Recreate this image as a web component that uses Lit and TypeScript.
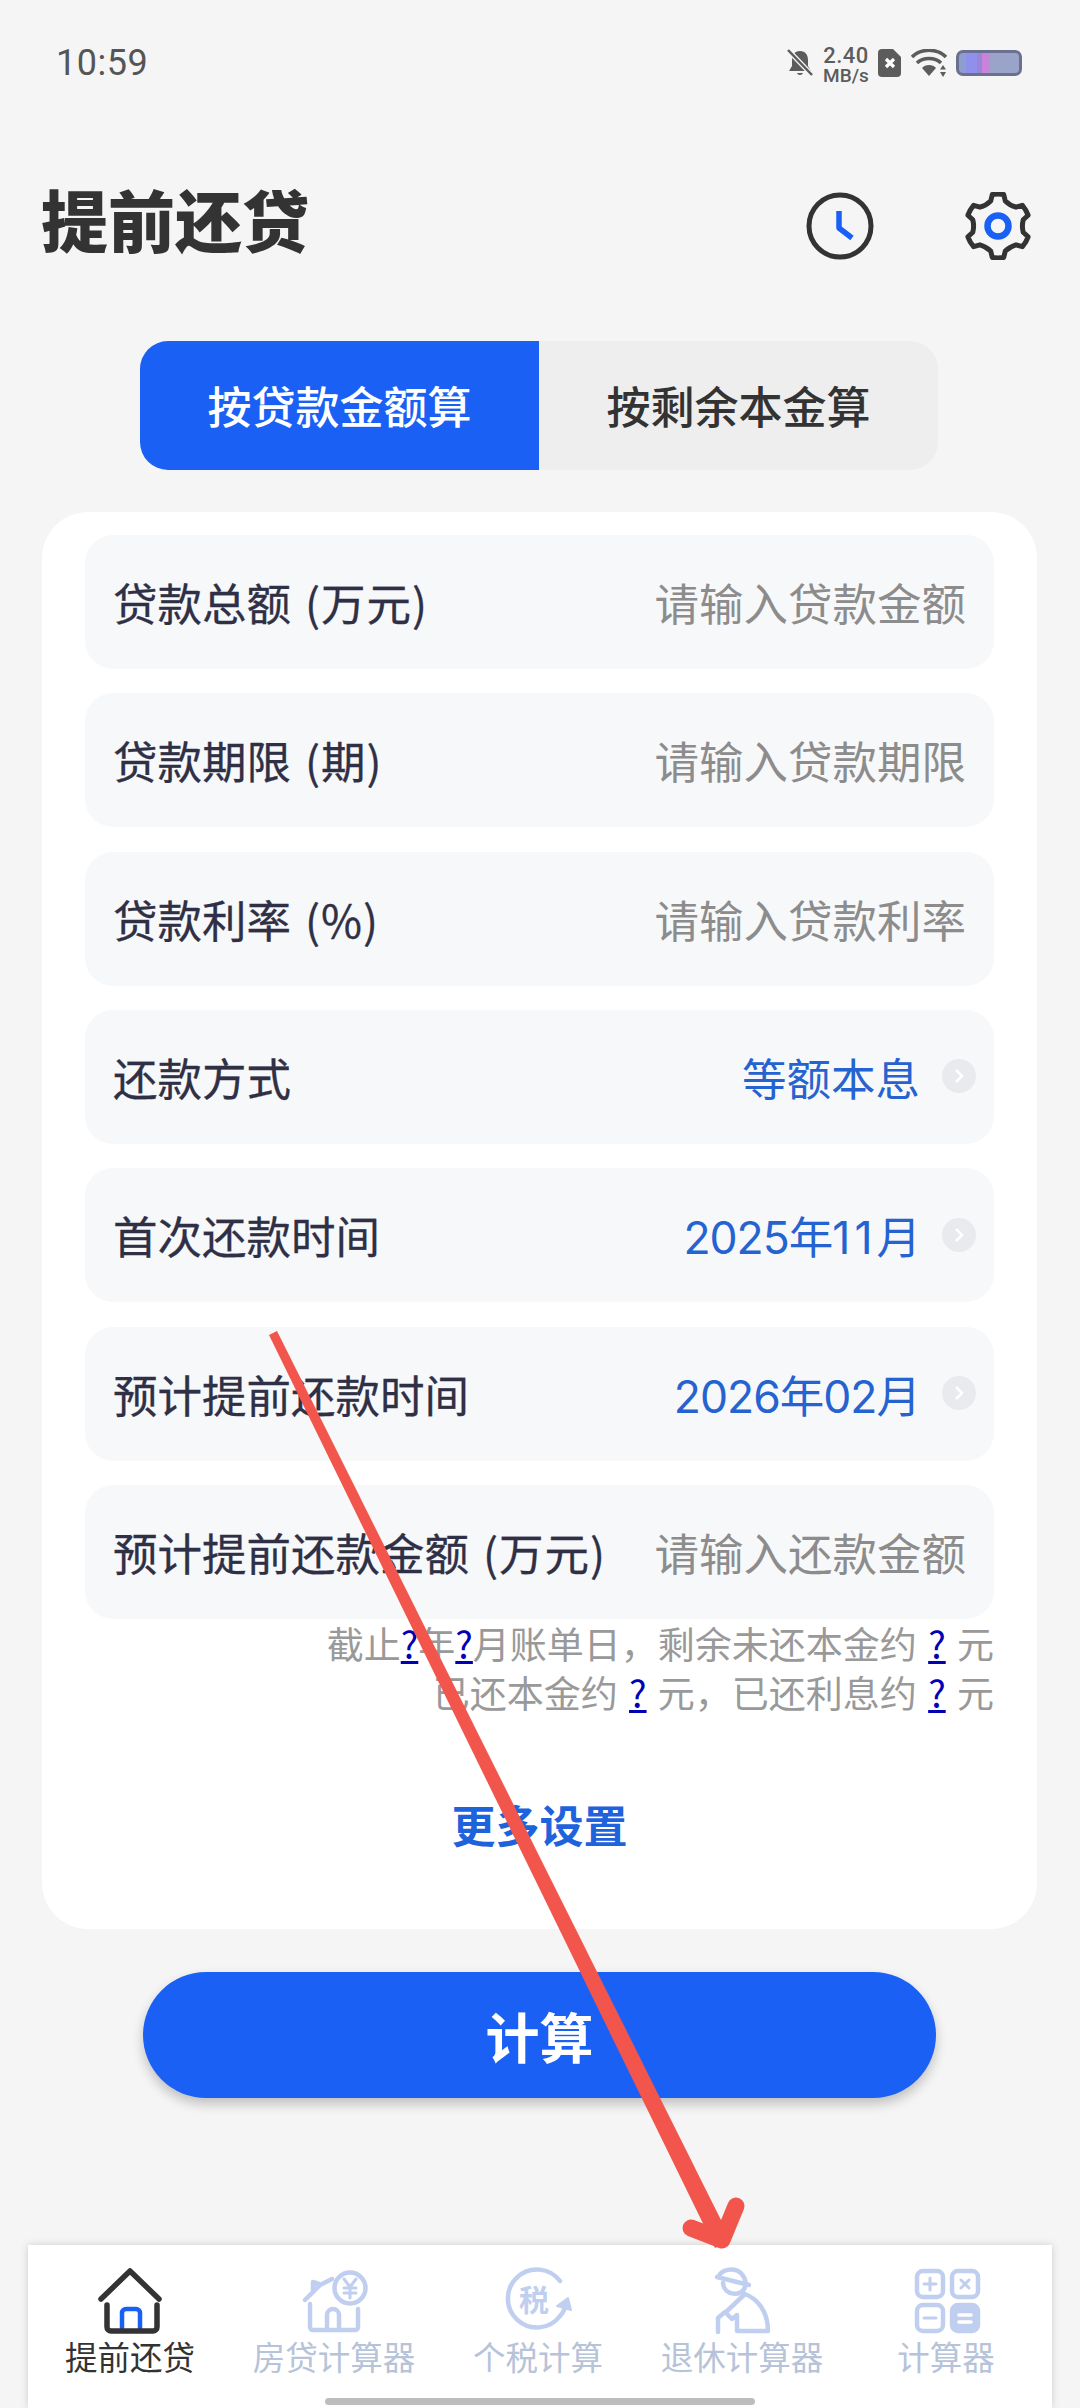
import { LitElement, html, css, svg } from "lit";
import { customElement } from "lit/decorators.js";

const gearPath = (() => {
  const cx = 34, cy = 34, R = 32, r = 25, n = 6;
  const pts: string[] = [];
  for (let i = 0; i < n; i++) {
    const a = (i * 2 * Math.PI) / n - Math.PI / 2;
    const step = (2 * Math.PI) / n;
    const p = (rad: number, ang: number) =>
      `${(cx + rad * Math.cos(ang)).toFixed(1)} ${(cy + rad * Math.sin(ang)).toFixed(1)}`;
    pts.push(`${i === 0 ? "M" : "L"}${p(r + 1, a - step * 0.27)}`);
    pts.push(`L${p(R, a - step * 0.17)}`);
    pts.push(`A${R} ${R} 0 0 1 ${p(R, a + step * 0.17)}`);
    pts.push(`L${p(r + 1, a + step * 0.27)}`);
    pts.push(`A${r} ${r} 0 0 0 ${p(r + 1, a + step * 0.73)}`);
  }
  return pts.join(" ") + "Z";
})();

const homeIcon = svg`<svg class="ti" viewBox="70 2250 120 90">
  <path d="M101 2299 L130 2271 L159 2299" fill="none" stroke="#333" stroke-width="5.5" stroke-linecap="round" stroke-linejoin="round"/>
  <path d="M122 2331V2313a4 4 0 0 1 4-4h10a4 4 0 0 1 4 4v18" fill="none" stroke="#1a60f5" stroke-width="4.5"/>
  <path d="M107 2305V2327a4 4 0 0 0 4 4H153a4 4 0 0 0 4-4V2305" fill="none" stroke="#333" stroke-width="5.5" stroke-linecap="round"/>
</svg>`;

const loanIcon = svg`<svg class="ti" viewBox="274 2250 120 90">
  <g fill="none" stroke="#c0cff0" stroke-width="4.5" stroke-linecap="round" stroke-linejoin="round">
    <path d="M305 2300 L320 2285 L332 2279"/>
    <path d="M313 2292 L313 2282 L319 2284"/>
    <path d="M310 2304V2327a3 3 0 0 0 3 3H355a3 3 0 0 0 3-3V2309"/>
    <path d="M327 2330V2315a6 6 0 0 1 12 0V2330"/>
    <circle cx="350" cy="2288" r="15.5"/>
    <path d="M344 2279l6 8l6-8M350 2287V2298M344 2288H356M344 2293H356" stroke-width="3"/>
  </g>
</svg>`;

const taxIcon = svg`<svg class="ti" viewBox="478 2250 120 90">
  <path d="M560 2281A29 29 0 1 0 560 2316" fill="none" stroke="#c0cff0" stroke-width="4.5" stroke-linecap="round"/>
  <path d="M560 2316Q565 2311 566 2303" fill="none" stroke="#c0cff0" stroke-width="4.5" stroke-linecap="round"/>
  <path d="M557 2306L568 2298L571 2310Z" fill="#c0cff0" stroke="#c0cff0" stroke-width="2" stroke-linejoin="round"/>
  <text class="tax" x="534" y="2311">税</text>
</svg>`;

const retireIcon = svg`<svg class="ti" viewBox="682 2250 120 90">
  <g fill="none" stroke="#c0cff0" stroke-width="4.5" stroke-linecap="round" stroke-linejoin="round">
    <path d="M717 2277L749 2285"/>
    <path d="M719 2276C722 2268 743 2264 746 2284"/>
    <path d="M723 2283C724 2296 742 2297 745 2287"/>
    <path d="M727 2311L745 2294C758 2299 768 2312 768 2331H737V2315L732 2319L725 2312L718 2318V2332"/>
  </g>
</svg>`;

const calcIcon = svg`<svg class="ti" viewBox="886 2250 120 90">
  <g fill="none" stroke="#c0cff0" stroke-width="4.5" stroke-linecap="round">
    <rect x="917" y="2271" width="26" height="26" rx="6"/>
    <rect x="952" y="2271" width="26" height="26" rx="6"/>
    <rect x="917" y="2305" width="26" height="26" rx="6"/>
    <rect x="952" y="2305" width="26" height="26" rx="6" fill="#c0cff0"/>
    <path d="M924 2284H936M930 2278V2290M924 2318H936" stroke-width="3"/>
    <path d="M961 2280L969 2288M969 2280L961 2288" stroke-width="3"/>
    <path d="M959 2315H971M959 2322H971" stroke="#fff" stroke-width="3.5"/>
  </g>
</svg>`;

const tabsData = [
  { label: "提前还贷", icon: homeIcon, active: true },
  { label: "房贷计算器", icon: loanIcon, active: false },
  { label: "个税计算", icon: taxIcon, active: false },
  { label: "退休计算器", icon: retireIcon, active: false },
  { label: "计算器", icon: calcIcon, active: false },
];

const rows = [
  { label: "贷款总额", unit: " (万元)", ph: "请输入贷款金额" },
  { label: "贷款期限", unit: " (期)", ph: "请输入贷款期限" },
  { label: "贷款利率", unit: " (%)", ph: "请输入贷款利率" },
  { label: "还款方式", val: html`等额本息` },
  { label: "首次还款时间", val: html`2025年<span class="ones">11</span>月`, date: true },
  { label: "预计提前还款时间", val: html`2026年02月`, date: true },
  { label: "预计提前还款金额", unit: " (万元)", ph: "请输入还款金额" },
];

@customElement("app-root")
export class AppRoot extends LitElement {
  static styles = css`
    :host {
      display: flex;
      flex-direction: column;
      position: relative;
      width: 1080px;
      height: 2408px;
      overflow: hidden;
      background: #f5f5f5;
      font-family: "Noto Sans CJK SC", "Noto Sans", sans-serif;
      color: #333;
    }
    .status {
      height: 126px;
      flex: none;
      display: flex;
      align-items: center;
      padding: 0 58px 0 56px;
    }
    .time {
      font-family: "Roboto", sans-serif;
      font-size: 36px;
      color: #555;
      letter-spacing: 0.5px;
      flex: 1;
    }
    .sys {
      display: flex;
      align-items: center;
      gap: 9px;
    }
    .speed {
      display: flex;
      flex-direction: column;
      align-items: center;
      font-family: "Roboto", sans-serif;
      color: #5c5c5c;
      font-weight: 500;
      width: 46px;
      padding-top: 3px;
    }
    .speed b {
      font-size: 22px;
      line-height: 21px;
      font-weight: 500;
      letter-spacing: 0.5px;
    }
    .speed i {
      font-style: normal;
      font-size: 19px;
      line-height: 19px;
    }
    .battery {
      width: 66px;
      height: 26px;
      box-sizing: border-box;
      border: 3px solid #6a7090;
      border-radius: 7px;
      background: linear-gradient(
        90deg,
        #8f9ccf 0 12%,
        #8e90ec 12% 30%,
        #9a86d8 30% 38%,
        #c884d8 38% 52%,
        #9aa3c8 52% 100%
      );
    }
    .header {
      height: 190px;
      flex: none;
      display: flex;
      align-items: center;
      padding: 0 48px 0 41px;
    }
    .title {
      font-size: 67px;
      font-weight: 900;
      line-height: 80px;
      flex: 1;
      color: #333;
      margin-top: -6px;
    }
    .hicons {
      display: flex;
      gap: 90px;
      margin-top: 10px;
    }
    .hicons svg {
      width: 68px;
      height: 68px;
      display: block;
    }
    .segs {
      flex: none;
      display: flex;
      margin: 25px 142px 0 140px;
      height: 129px;
    }
    .seg {
      flex: 1;
      display: flex;
      align-items: center;
      justify-content: center;
      font-size: 44px;
      font-weight: 500;
      padding-bottom: 2px;
    }
    .seg.on {
      background: #1a60f5;
      color: #fff;
      border-radius: 28px 0 0 28px;
    }
    .seg.off {
      background: #eeeeee;
      color: #333;
      border-radius: 0 28px 28px 0;
    }
    .card {
      flex: none;
      height: 1417px;
      box-sizing: border-box;
      margin: 42px 43px 0 42px;
      padding: 23px 43px 0;
      background: #fff;
      border-radius: 46px;
      display: flex;
      flex-direction: column;
    }
    .rows {
      display: flex;
      flex-direction: column;
      gap: 24.33px;
    }
    .row {
      height: 134px;
      box-sizing: border-box;
      background: #f7f8fa;
      border-radius: 28px;
      display: flex;
      align-items: center;
      padding: 0 28px 1px 28px;
      font-size: 44.5px;
    }
    .row.sel {
      padding-right: 18px;
    }
    .lab {
      flex: 1;
      color: #2f3045;
      font-weight: 400;
      white-space: pre;
      -webkit-text-stroke: 0.3px #2f3045;
    }
    .unit {
      word-spacing: 3px;
      letter-spacing: 1px;
    }
    .ph {
      color: #8c8c8c;
    }
    .val {
      color: #2563d0;
    }
    .val.date {
      font-family: "Inter", "Noto Sans CJK SC", sans-serif;
      letter-spacing: -1px;
    }
    .ones {
      letter-spacing: 4px;
    }
    .chev {
      width: 34px;
      height: 34px;
      margin-left: 22px;
      border-radius: 50%;
      background: #e8eaee;
      display: flex;
      align-items: center;
      justify-content: center;
    }
    .chev svg {
      width: 12px;
      height: 16px;
      display: block;
    }
    .note {
      font-size: 37px;
      line-height: 49px;
      word-spacing: 3px;
      color: #999;
      text-align: right;
      white-space: nowrap;
    }
    .note u {
      color: #0000b4;
    }
    .more {
      margin-top: 77px;
      text-align: center;
      font-size: 44px;
      line-height: 60px;
      font-weight: 700;
      color: #1f63dc;
    }
    .btn {
      flex: none;
      margin: 43px 144px 0 143px;
      height: 126px;
      border-radius: 63px;
      background: #1a60f5;
      color: #fff;
      font-size: 54px;
      font-weight: 700;
      display: flex;
      align-items: center;
      justify-content: center;
      box-shadow: 0 6px 12px rgba(0, 0, 0, 0.22);
    }
    .bar {
      flex: none;
      margin: auto 28px 0;
      height: 163px;
      box-sizing: border-box;
      padding: 5px 4px 0 0;
      background: #fff;
      box-shadow: 0 0 8px rgba(0, 0, 0, 0.16);
      display: grid;
      grid-template-columns: repeat(5, 1fr);
    }
    .item {
      display: flex;
      flex-direction: column;
      align-items: center;
    }
    .ti {
      width: 120px;
      height: 90px;
      display: block;
    }
    .tax {
      font-size: 30px;
      font-weight: 700;
      fill: #c0cff0;
      text-anchor: middle;
    }
    .tl {
      margin-top: -6px;
      font-size: 32.5px;
      line-height: 44px;
      color: #b6c3d8;
      white-space: nowrap;
    }
    .item.on .tl {
      color: #333;
    }
    .indicator {
      position: absolute;
      left: 325px;
      bottom: 3px;
      width: 430px;
      height: 7px;
      border-radius: 4px;
      background: #bdbdbd;
    }
    .arrow {
      position: absolute;
      left: 0;
      top: 0;
      width: 1080px;
      height: 2408px;
      pointer-events: none;
    }
  `;

  render() {
    return html`
      <div class="status">
        <div class="time">10:59</div>
        <div class="sys">
          <svg width="28" height="30" viewBox="0 0 28 30">
            <path d="M14 3c-5.5 0-8 4-8 9v6l-3 5h22l-3-5v-6c0-5-2.500-9-8-9zM11 25c.5 2.500 5.500 2.500 6 0z" fill="#5c5c5c"/>
            <path d="M2 2L27 28" stroke="#f5f5f5" stroke-width="5"/>
            <path d="M2 2L26 27" stroke="#5c5c5c" stroke-width="2.500"/>
          </svg>
          <div class="speed"><b>2.40</b><i>MB/s</i></div>
          <svg width="24" height="28" viewBox="0 0 24 28">
            <path d="M4 0H15L23 8V24a4 4 0 0 1-4 4H4a4 4 0 0 1-4-4V4a4 4 0 0 1 4-4z" fill="#5c5c5c"/>
            <path d="M8 10L16 18M16 10L8 18" stroke="#fff" stroke-width="3.200"/>
          </svg>
          <svg width="36" height="28" viewBox="0 0 36 28">
            <g fill="none" stroke="#5c5c5c" stroke-width="3.500">
              <path d="M1 8C10-1 26-1 35 8"/>
              <path d="M6 14C12 8 24 8 30 14"/>
            </g>
            <path d="M11 19C14 15 22 15 25 19L18 27z" fill="#5c5c5c"/>
            <path d="M32 16l-3 4.500h6zM32 28l-3-5h6z" fill="#5c5c5c"/>
          </svg>
          <div class="battery"></div>
        </div>
      </div>

      <div class="header">
        <div class="title">提前还贷</div>
        <div class="hicons">
          <svg viewBox="0 0 68 68">
            <circle cx="34" cy="34" r="31" fill="none" stroke="#333" stroke-width="5"/>
            <path d="M33 19V36L46 46" fill="none" stroke="#1a60f5" stroke-width="5.500" stroke-linejoin="round"/>
          </svg>
          <svg viewBox="0 0 68 68">
            <path d="${gearPath}" fill="none" stroke="#333" stroke-width="5" stroke-linejoin="round"/>
            <circle cx="34" cy="34" r="10.500" fill="none" stroke="#1a60f5" stroke-width="6.500"/>
          </svg>
        </div>
      </div>

      <div class="segs">
        <div class="seg on">按贷款金额算</div>
        <div class="seg off">按剩余本金算</div>
      </div>

      <div class="card">
        <div class="rows">
          ${rows.map(
            (r) => html`
              <div class="row ${r.val ? "sel" : ""}">
                <div class="lab">${r.label}<span class="unit">${r.unit ?? ""}</span></div>
                ${r.val
                  ? html`<div class="val ${r.date ? "date" : ""}">${r.val}</div>
                      <div class="chev">
                        <svg viewBox="0 0 12 16">
                          <path d="M3 2L9 8L3 14" fill="none" stroke="#fff" stroke-width="2.500"/>
                        </svg>
                      </div>`
                  : html`<div class="ph">${r.ph}</div>`}
              </div>
            `
          )}
        </div>
        <div class="note">
          <div>截止<u>?</u>年<u>?</u>月账单日，剩余未还本金约 <u>?</u> 元</div>
          <div>已还本金约 <u>?</u> 元，已还利息约 <u>?</u> 元</div>
        </div>
        <div class="more">更多设置</div>
      </div>

      <div class="btn">计算</div>

      <div class="bar">
        ${tabsData.map(
          (t) => html`
            <div class="item ${t.active ? "on" : ""}">
              ${t.icon}
              <div class="tl">${t.label}</div>
            </div>
          `
        )}
      </div>
      <div class="indicator"></div>

      <svg class="arrow" viewBox="0 0 1080 2408">
        <polygon points="269,1335 277,1331 731,2240 715,2248" fill="#f1554c"/>
        <polyline points="691,2228 722,2240 736,2206" fill="none" stroke="#f1554c" stroke-width="17" stroke-linecap="round" stroke-linejoin="round"/>
      </svg>
    `;
  }
}
